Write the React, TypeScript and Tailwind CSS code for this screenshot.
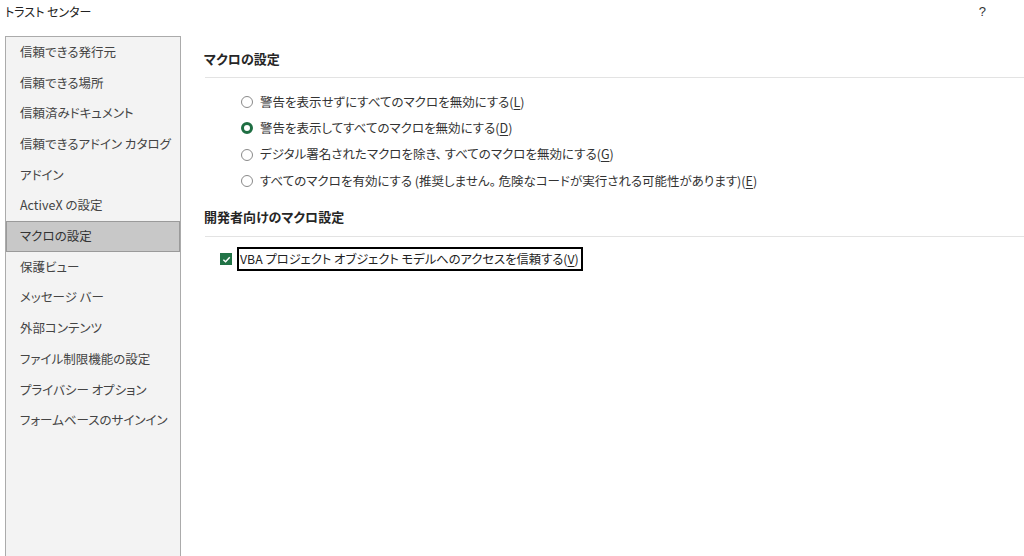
import React from 'react';

const navItems = [
  '信頼できる発行元',
  '信頼できる場所',
  '信頼済みドキュメント',
  '信頼できるアドイン カタログ',
  'アドイン',
  'ActiveX の設定',
  'マクロの設定',
  '保護ビュー',
  'メッセージ バー',
  '外部コンテンツ',
  'ファイル制限機能の設定',
  'プライバシー オプション',
  'フォームベースのサインイン',
];

const macroOptions = [
  { label: '警告を表示せずにすべてのマクロを無効にする', key: 'L', checked: false },
  { label: '警告を表示してすべてのマクロを無効にする', key: 'D', checked: true },
  { label: 'デジタル署名されたマクロを除き、 すべてのマクロを無効にする', key: 'G', checked: false },
  { label: 'すべてのマクロを有効にする (推奨しません。 危険なコードが実行される可能性があります)', key: 'E', checked: false },
];

const Radio: React.FC<{ checked: boolean }> = ({ checked }) =>
  checked ? (
    <span className="w-[12px] h-[12px] rounded-full border-[3px] border-[#1e6e42] bg-white shrink-0" />
  ) : (
    <span className="w-[12px] h-[12px] rounded-full border border-[#8a8a8a] bg-white shrink-0" />
  );

const App: React.FC = () => {
  return (
    <div className="w-[1024px] h-[556px] overflow-hidden bg-white text-[#333] font-['Meiryo_UI','Noto_Sans_CJK_JP',sans-serif] [font-feature-settings:'palt'] relative">
      {/* Title bar */}
      <div className="flex items-center justify-between h-[24px] pl-[5px] pr-[38px]">
        <span className="text-[12px] text-[#222]">トラスト センター</span>
        <span className="text-[13px] text-[#333] font-['Liberation_Sans',sans-serif]">?</span>
      </div>

      <div className="flex mt-[12px]">
        {/* Sidebar */}
        <div className="ml-[5px] w-[176px] h-[540px] shrink-0 bg-[#f3f3f3] border border-[#ababab]">
          {navItems.map((item, i) => (
            <div
              key={item}
              className={
                i === 6
                  ? 'h-[30.7px] flex items-center pl-[13px] text-[12.5px] text-[#333] bg-[#c8c8c8] border border-[#9a9a9a]'
                  : 'h-[30.7px] flex items-center pl-[14px] text-[12.5px] text-[#444]'
              }
            >
              {item}
            </div>
          ))}
        </div>

        {/* Content */}
        <div className="flex-1 pl-[23px] pt-[12px]">
          <h2 className="text-[13px] font-bold text-[#262626] leading-[22px]">マクロの設定</h2>
          <div className="mt-[7px] ml-[1px] border-t border-[#e3e3e3]" />

          <div className="mt-[11px] pl-[37px] flex flex-col">
            {macroOptions.map((o) => (
              <div key={o.key} className="flex items-center gap-[7px] h-[26.3px] text-[12.5px] text-[#333]">
                <Radio checked={o.checked} />
                <span>
                  {o.label}(<span className="underline underline-offset-2">{o.key}</span>)
                </span>
              </div>
            ))}
          </div>

          <h2 className="mt-[12px] text-[13px] font-bold text-[#262626] leading-[22px]">開発者向けのマクロ設定</h2>
          <div className="mt-[8px] ml-[1px] border-t border-[#e3e3e3]" />

          <div className="mt-[10px] pl-[16px] flex items-center gap-[5px]">
            <span className="w-[12px] h-[12px] bg-[#217346] flex items-center justify-center shrink-0">
              <svg width="9" height="9" viewBox="0 0 10 10">
                <path d="M1.5 5.2 L4 7.6 L8.6 2.6" fill="none" stroke="white" strokeWidth="1.6" />
              </svg>
            </span>
            <span className="border-2 border-black h-[24px] pl-[1px] pr-[2px] flex items-center text-[12.3px] text-[#222]">
              VBA プロジェクト オブジェクト モデルへのアクセスを信頼する(<span className="underline underline-offset-2">V</span>)
            </span>
          </div>
        </div>
      </div>
    </div>
  );
};

export default App;
